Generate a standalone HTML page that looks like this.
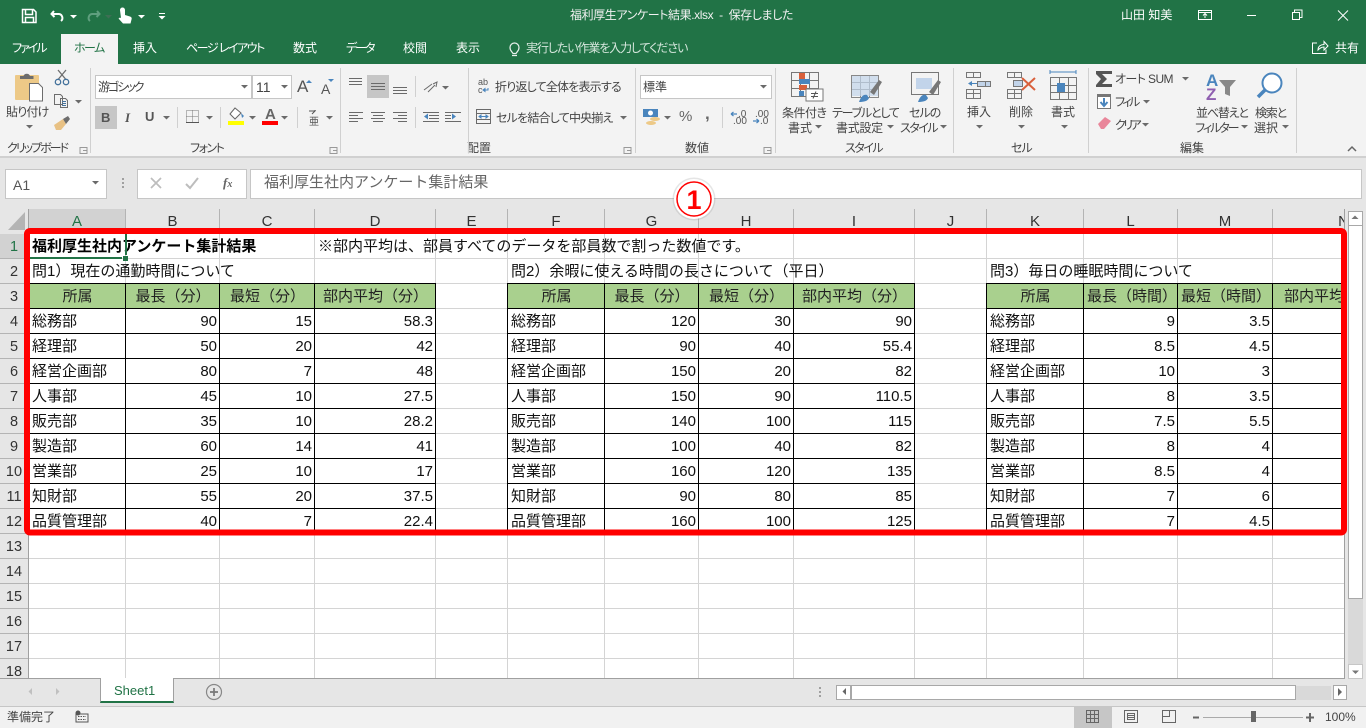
<!DOCTYPE html>
<html lang="ja"><head><meta charset="utf-8"><title>福利厚生アンケート結果.xlsx - Excel</title>
<style>
html,body{margin:0;padding:0;width:1366px;height:728px;overflow:hidden;background:#e6e6e6}
body{position:relative;font-family:"Liberation Sans","Noto Sans CJK JP",sans-serif}
.a{position:absolute}
.t{position:absolute;white-space:nowrap;font-size:12px;line-height:16px;color:#444;font-feature-settings:"palt"}
.w{color:#fff}
.c{text-align:center}
#hdr{position:absolute;left:29px;top:209px;height:25px;width:1316px;overflow:hidden;display:flex}
#hdr div{flex:none;height:24px;line-height:25px;text-align:center;font-size:15px;color:#333;border-right:1px solid #b4b4b4;box-sizing:border-box}
#rows{position:absolute;left:0;top:234px;width:28px}
#rows div{height:24px;border-bottom:1px solid #b4b4b4;line-height:26px;text-align:center;font-size:14.5px;color:#333}
#wrap{position:absolute;left:29px;top:234px;width:1315px;height:300px;overflow:hidden}
table{border-collapse:separate;border-spacing:0;table-layout:fixed;width:1386px}
td{height:25px;padding:0 3px;box-sizing:border-box;font-size:15px;line-height:25px;color:#111;white-space:nowrap;overflow:visible}
td:nth-child(n){vertical-align:middle}
.r{text-align:right}
.h td{background:#a9d08e;text-align:center;color:#222}
.h td.n{background:none}
.b{font-weight:bold;color:#000}
</style></head><body>

<div class="a" style="left:0;top:0;width:1366px;height:64px;background:#217346"></div>
<div class="a" style="left:61px;top:34px;width:57px;height:30px;background:#f3f3f3"></div>
<div class="a" style="left:0;top:64px;width:1366px;height:92px;background:#f3f3f3;border-bottom:2px solid #d0d0d0"></div>

<span class="t w" style="left:570px;top:7px;color:#f1f1f1;letter-spacing:-.4px">福利厚生アンケート結果.xlsx&nbsp; -&nbsp; 保存しました</span>
<span class="t w" style="left:1121px;top:7px">山田 知美</span>
<span class="t w" style="left:12px;top:40px;letter-spacing:-2px">ファイル</span>
<span class="t" style="left:74px;top:40px;color:#217346;letter-spacing:-1.5px">ホーム</span>
<span class="t w" style="left:133px;top:40px">挿入</span>
<span class="t w" style="left:186px;top:40px;letter-spacing:-1.500px">ページ レイアウト</span>
<span class="t w" style="left:293px;top:40px">数式</span>
<span class="t w" style="left:346px;top:40px;letter-spacing:-2px">データ</span>
<span class="t w" style="left:403px;top:40px">校閲</span>
<span class="t w" style="left:456px;top:40px">表示</span>
<span class="t" style="left:526px;top:40px;color:#d5e6dc;letter-spacing:-1.1px">実行したい作業を入力してください</span>
<span class="t w" style="left:1335px;top:40px">共有</span>

<div class="a" style="left:95px;top:75px;width:155px;height:22px;background:#fff;border:1px solid #c6c6c6"></div>
<div class="a" style="left:252px;top:75px;width:38px;height:22px;background:#fff;border:1px solid #c6c6c6"></div>
<div class="a" style="left:640px;top:75px;width:130px;height:22px;background:#fff;border:1px solid #c6c6c6"></div>
<div class="a" style="left:95px;top:106px;width:22px;height:23px;background:#c6c6c6"></div>
<div class="a" style="left:367px;top:75px;width:22px;height:23px;background:#c6c6c6"></div>
<span class="t" style="left:98px;top:79px;letter-spacing:-2px">游ゴシック</span>
<span class="t" style="left:256px;top:79px;font-size:14px">11</span>
<span class="t" style="left:643px;top:79px">標準</span>
<span class="t" style="left:6px;top:104px;letter-spacing:-.8px">貼り付け</span>
<span class="t" style="left:495px;top:79px;letter-spacing:-.8px">折り返して全体を表示する</span>
<span class="t" style="left:496px;top:110px;letter-spacing:-.8px">セルを結合して中央揃え</span>
<span class="t" style="left:782px;top:105px;letter-spacing:-.5px">条件付き</span>
<span class="t" style="left:788px;top:120px">書式</span>
<span class="t" style="left:832px;top:105px;letter-spacing:-1.200px">テーブルとして</span>
<span class="t" style="left:836px;top:120px;letter-spacing:-.3px">書式設定</span>
<span class="t" style="left:909px;top:105px;letter-spacing:-1px">セルの</span>
<span class="t" style="left:900px;top:120px;letter-spacing:-1.500px">スタイル</span>
<span class="t" style="left:967px;top:104px">挿入</span>
<span class="t" style="left:1009px;top:104px">削除</span>
<span class="t" style="left:1051px;top:104px">書式</span>
<span class="t" style="left:1115px;top:71px;letter-spacing:-.6px">オート SUM</span>
<span class="t" style="left:1115px;top:94px;letter-spacing:-2.500px">フィル</span>
<span class="t" style="left:1115px;top:117px;letter-spacing:-2.500px">クリア</span>
<span class="t" style="left:1196px;top:105px;letter-spacing:-1.200px">並べ替えと</span>
<span class="t" style="left:1195px;top:120px;letter-spacing:-2px">フィルター</span>
<span class="t" style="left:1255px;top:105px;letter-spacing:-1.200px">検索と</span>
<span class="t" style="left:1254px;top:120px">選択</span>
<span class="t" style="left:7px;top:140px;letter-spacing:-2px">クリップボード</span>
<span class="t" style="left:190px;top:140px;letter-spacing:-1.500px">フォント</span>
<span class="t" style="left:467px;top:140px">配置</span>
<span class="t" style="left:685px;top:140px">数値</span>
<span class="t" style="left:845px;top:140px;letter-spacing:-1.500px">スタイル</span>
<span class="t" style="left:1011px;top:140px;letter-spacing:-1px">セル</span>
<span class="t" style="left:1180px;top:140px">編集</span>
<span class="t" style="left:679px;top:109px;font-size:15px;color:#666">%</span>
<span class="t" style="left:705px;top:106px;font-size:17px;font-weight:bold;color:#666">,</span>
<span class="t" style="left:297px;top:78px;font-size:17px;line-height:18px;color:#555">A</span>
<span class="t" style="left:321px;top:81px;font-size:14px;line-height:16px;color:#555">A</span>
<span class="t" style="left:101px;top:110px;font-size:13px;font-weight:bold;color:#555">B</span>
<span class="t" style="left:125px;top:110px;font-size:13px;font-style:italic;font-family:'Liberation Serif',serif;font-weight:bold;color:#555">I</span>
<span class="t" style="left:145px;top:109px;font-size:13px;font-weight:bold;color:#555">U</span>
<span class="t" style="left:265px;top:107px;font-size:15px;font-weight:bold;color:#666">A</span>
<span class="t" style="left:309px;top:117px;font-size:10px;line-height:11px;color:#555">亜</span>

<!-- formula bar -->
<div class="a" style="left:5px;top:169px;width:100px;height:28px;background:#fff;border:1px solid #c6c6c6"></div>
<div class="a" style="left:137px;top:169px;width:108px;height:28px;background:#fff;border:1px solid #c6c6c6"></div>
<div class="a" style="left:250px;top:169px;width:1110px;height:28px;background:#fff;border:1px solid #c6c6c6"></div>
<span class="t" style="left:13px;top:177px;font-size:14px;color:#555">A1</span>
<span class="t" style="left:223px;top:175px;font-size:13px;font-family:'Liberation Serif',serif;font-style:italic;font-weight:bold;color:#666">f<span style="font-size:10px">x</span></span>
<span class="t" style="left:264px;top:175px;font-size:15px;line-height:16px;color:#666;font-feature-settings:normal">福利厚生社内アンケート集計結果</span>

<!-- sheet -->
<div class="a" style="left:29px;top:234px;width:1315px;height:444px;background:#fff"></div>
<div class="a" style="left:28px;top:209px;width:98px;height:25px;background:#d2d2d2"></div>
<div class="a" style="left:0;top:234px;width:28px;height:24px;background:#d2d2d2"></div>
<div id="hdr">
<div style="width:97px;color:#217346">A</div><div style="width:94px">B</div><div style="width:95px">C</div><div style="width:121px">D</div><div style="width:72px">E</div><div style="width:97px">F</div><div style="width:94px">G</div><div style="width:95px">H</div><div style="width:121px">I</div><div style="width:72px">J</div><div style="width:97px">K</div><div style="width:94px">L</div><div style="width:95px">M</div><div style="width:142px">N</div>
</div>
<div id="rows" style="height:444px;overflow:hidden">
<div style="color:#217346">1</div><div>2</div><div>3</div><div>4</div><div>5</div><div>6</div><div>7</div><div>8</div><div>9</div><div>10</div><div>11</div><div>12</div><div>13</div><div>14</div><div>15</div><div>16</div><div>17</div><div>18</div>
</div>

<svg class="a" style="left:0;top:0" width="1366" height="728" shape-rendering="crispEdges">
<path fill="none" stroke="#d4d4d4" d="M29 258.500H1344M29 283.500H1344M29 308.500H1344M29 333.500H1344M29 358.500H1344M29 383.500H1344M29 408.500H1344M29 433.500H1344M29 458.500H1344M29 483.500H1344M29 508.500H1344M29 533.500H1344M29 558.500H1344M29 583.500H1344M29 608.500H1344M29 633.500H1344M29 658.500H1344"/>
<path fill="none" stroke="#d4d4d4" d="M125.500 234V678M219.500 234V678M314.500 234V678M435.500 234V678M507.500 234V678M604.500 234V678M698.500 234V678M793.500 234V678M914.500 234V678M986.500 234V678M1083.500 234V678M1177.500 234V678M1272.500 234V678"/>
<path fill="none" stroke="#a0a0a0" d="M28.500 209V678M28 233.500H1344M1344.500 209V678M0 678.500H1345"/>
</svg>

<div id="wrap"><table>
<colgroup><col style="width:97px"><col style="width:94px"><col style="width:95px"><col style="width:121px"><col style="width:72px"><col style="width:97px"><col style="width:94px"><col style="width:95px"><col style="width:121px"><col style="width:72px"><col style="width:97px"><col style="width:94px"><col style="width:95px"><col style="width:142px"></colgroup>
<tr><td class="b">福利厚生社内アンケート集計結果</td><td></td><td></td><td>※部内平均は、部員すべてのデータを部員数で割った数値です。</td><td></td><td></td><td></td><td></td><td></td><td></td><td></td><td></td><td></td><td></td></tr>
<tr><td>問1）現在の通勤時間について</td><td></td><td></td><td></td><td></td><td>問2）余暇に使える時間の長さについて（平日）</td><td></td><td></td><td></td><td></td><td>問3）毎日の睡眠時間について</td><td></td><td></td><td></td></tr>
<tr class="h"><td>所属</td><td>最長（分）</td><td>最短（分）</td><td>部内平均（分）</td><td class="n"></td><td>所属</td><td>最長（分）</td><td>最短（分）</td><td>部内平均（分）</td><td class="n"></td><td>所属</td><td>最長（時間）</td><td>最短（時間）</td><td>部内平均（時間）</td></tr>
<tr><td>総務部</td><td class="r">90</td><td class="r">15</td><td class="r">58.3</td><td></td><td>総務部</td><td class="r">120</td><td class="r">30</td><td class="r">90</td><td></td><td>総務部</td><td class="r">9</td><td class="r">3.5</td><td></td></tr>
<tr><td>経理部</td><td class="r">50</td><td class="r">20</td><td class="r">42</td><td></td><td>経理部</td><td class="r">90</td><td class="r">40</td><td class="r">55.4</td><td></td><td>経理部</td><td class="r">8.5</td><td class="r">4.5</td><td></td></tr>
<tr><td>経営企画部</td><td class="r">80</td><td class="r">7</td><td class="r">48</td><td></td><td>経営企画部</td><td class="r">150</td><td class="r">20</td><td class="r">82</td><td></td><td>経営企画部</td><td class="r">10</td><td class="r">3</td><td></td></tr>
<tr><td>人事部</td><td class="r">45</td><td class="r">10</td><td class="r">27.5</td><td></td><td>人事部</td><td class="r">150</td><td class="r">90</td><td class="r">110.5</td><td></td><td>人事部</td><td class="r">8</td><td class="r">3.5</td><td></td></tr>
<tr><td>販売部</td><td class="r">35</td><td class="r">10</td><td class="r">28.2</td><td></td><td>販売部</td><td class="r">140</td><td class="r">100</td><td class="r">115</td><td></td><td>販売部</td><td class="r">7.5</td><td class="r">5.5</td><td></td></tr>
<tr><td>製造部</td><td class="r">60</td><td class="r">14</td><td class="r">41</td><td></td><td>製造部</td><td class="r">100</td><td class="r">40</td><td class="r">82</td><td></td><td>製造部</td><td class="r">8</td><td class="r">4</td><td></td></tr>
<tr><td>営業部</td><td class="r">25</td><td class="r">10</td><td class="r">17</td><td></td><td>営業部</td><td class="r">160</td><td class="r">120</td><td class="r">135</td><td></td><td>営業部</td><td class="r">8.5</td><td class="r">4</td><td></td></tr>
<tr><td>知財部</td><td class="r">55</td><td class="r">20</td><td class="r">37.5</td><td></td><td>知財部</td><td class="r">90</td><td class="r">80</td><td class="r">85</td><td></td><td>知財部</td><td class="r">7</td><td class="r">6</td><td></td></tr>
<tr><td>品質管理部</td><td class="r">40</td><td class="r">7</td><td class="r">22.4</td><td></td><td>品質管理部</td><td class="r">160</td><td class="r">100</td><td class="r">125</td><td></td><td>品質管理部</td><td class="r">7</td><td class="r">4.5</td><td></td></tr>
</table></div>

<!-- scrollbars / tabs / status -->
<div class="a" style="left:1345px;top:209px;width:21px;height:497px;background:#e6e6e6"></div>
<div class="a" style="left:1348px;top:226px;width:15px;height:452px;background:#d9d9d9"></div>
<div class="a" style="left:1348px;top:211px;width:13px;height:14px;background:#fff;border:1px solid #a8a8a8"></div>
<div class="a" style="left:1348px;top:225px;width:13px;height:372px;background:#fff;border:1px solid #a8a8a8"></div>
<div class="a" style="left:1348px;top:664px;width:13px;height:13px;background:#fff;border:1px solid #c6c6c6"></div>
<div class="a" style="left:0;top:679px;width:1345px;height:27px;background:#e6e6e6"></div>
<div class="a" style="left:100px;top:678px;width:72px;height:23px;background:#fff;border-left:1px solid #a0a0a0;border-right:1px solid #a0a0a0;border-bottom:2px solid #217346"></div>
<span class="t" style="left:114px;top:683px;font-size:13px;color:#217346;font-feature-settings:normal">Sheet1</span>
<div class="a" style="left:836px;top:685px;width:13px;height:13px;background:#fff;border:1px solid #a8a8a8"></div>
<div class="a" style="left:851px;top:685px;width:443px;height:13px;background:#fff;border:1px solid #a8a8a8"></div>
<div class="a" style="left:1296px;top:686px;width:35px;height:14px;background:#d9d9d9"></div>
<div class="a" style="left:1333px;top:685px;width:12px;height:13px;background:#fff;border:1px solid #a8a8a8"></div>
<div class="a" style="left:0;top:706px;width:1366px;height:22px;background:#f1f1f1;box-shadow:inset 0 1px 0 #c6c6c6"></div>
<div class="a" style="left:1074px;top:707px;width:38px;height:21px;background:#c6c6c6"></div>
<span class="t" style="left:7px;top:709px;font-feature-settings:normal;color:#444">準備完了</span>
<span class="t" style="left:1325px;top:709px;color:#444;font-feature-settings:normal">100%</span>

<!-- icons and overlays -->
<svg class="a" style="left:0;top:0" width="1366" height="728">
<defs><path id="d" d="M0 0h7l-3.500 3.500z" fill="#6a6a6a"/><path id="dw" d="M0 0h7l-3.500 3.500z" fill="#fff"/></defs>
<g shape-rendering="crispEdges">
<path fill="none" stroke="#000" d="M28 283.500H436M507 283.500H915M986 283.500H1345M28 308.500H436M507 308.500H915M986 308.500H1345M28 333.500H436M507 333.500H915M986 333.500H1345M28 358.500H436M507 358.500H915M986 358.500H1345M28 383.500H436M507 383.500H915M986 383.500H1345M28 408.500H436M507 408.500H915M986 408.500H1345M28 433.500H436M507 433.500H915M986 433.500H1345M28 458.500H436M507 458.500H915M986 458.500H1345M28 483.500H436M507 483.500H915M986 483.500H1345M28 508.500H436M507 508.500H915M986 508.500H1345"/>
<path fill="none" stroke="#000" d="M125.500 283V533M219.500 283V533M314.500 283V533M435.500 283V533M507.500 283V533M604.500 283V533M698.500 283V533M793.500 283V533M914.500 283V533M986.500 283V533M1083.500 283V533M1177.500 283V533M1272.500 283V533"/>
<path fill="#217346" d="M30 257h92v2h-92zM125 234h2v21h-2zM123 256h5v5h-5z"/>
<path fill="none" stroke="#d0d0d0" d="M90.500 68V153M340.500 68V153M468.500 68V153M635.500 68V153M775.500 68V153M953.500 68V153M1088.500 68V153M1296.500 68V153M177.500 107V128M220.500 107V128M297.500 107V128M415.500 76V97M415.500 107V128M722.500 107V128"/>
</g>

<!-- corner triangle -->
<path d="M25 212V230H8z" fill="#b4b4b4"/>

<!-- title bar icons -->
<g fill="none" stroke="#fff" stroke-width="1.500">
<path d="M22.500 9.500h11l2.500 2.500v10.500h-13.500z"/><path d="M25.500 10v4.500h7v-4.500M25.500 22v-4.500h8v4.500" stroke-width="1.500"/>
<path d="M54 11l-2.500 3 3 3M52 14h7a4 4 0 0 1 2 7" stroke-width="2"/>
<path d="M97 11l2.500 3-3 3M99 14h-7a4 4 0 0 0-2 7" stroke="#5f9f7e" stroke-width="2"/>
<path d="M1198.500 10.500h13v9h-13zM1198.500 12.500h13M1205 18v-4M1203 15.500l2-2 2 2" stroke-width="1"/>
<path d="M1247 15.500h9" stroke-width="1"/>
<path d="M1292.500 12.500h7v7h-7zM1294.500 12v-2h7.500v7.500h-2" stroke-width="1"/>
<path d="M1338 10.500l10 10M1348 10.500l-10 10" stroke-width="1"/>
<path d="M513 53.500c-1-2-3-2.500-3-6a4.500 4.500 0 0 1 9 0c0 3.500-2 4-3 6zM512 55.500h5" stroke-width="1.200" stroke="#e8f0ec"/>
<path d="M1317 43h-4.500v10.500h13.500v-4M1318 50c0-4 3-5.500 6-5.500v-3l4 4.500-4 4v-3c-2 0-4 1-6 3z" stroke-width="1"/>
</g>
<path fill="#fff" d="M120 10a2.500 2.500 0 0 1 5 0v5l5 1.500c1.500.5 2 1.500 1.500 3l-1 4h-7.500l-4.500-5 1.500-1 1 .5z"/>
<use href="#dw" x="70" y="15"/><use href="#d" x="105" y="15" opacity=".4"/><use href="#dw" x="138" y="15"/>
<path d="M159 13.500h6" stroke="#fff"/><use href="#dw" x="158.500" y="16"/>

<!-- clipboard group -->
<rect x="15" y="75" width="24" height="25" rx="1" fill="#edc987"/>
<path d="M20 79v-3h3.500a3.500 3.500 0 0 1 6.500 0h3.500v3z" fill="#6d6d6d"/>
<path d="M29.500 83.500h9l4 4v13.500h-13z" fill="#fff" stroke="#6d6d6d"/>
<g fill="none" stroke="#6d6d6d" stroke-width="1.300">
<path d="M58 70l7.500 9M66 70l-7.500 9"/>
<circle cx="58" cy="82" r="2.700" stroke="#44729c"/><circle cx="66" cy="82" r="2.700" stroke="#44729c"/>
<path d="M54.500 94.500h6l2 2v8h-8zM60.500 98.500h5l2 2v7h-7z" stroke-width="1"/>
<path d="M62 101.500h4M62 103.500h4M62 105.500h4" stroke="#44729c" stroke-width="1"/>
</g>
<path d="M54 125l9-6 3 5-5 6h-5z" fill="#e8c184"/><path d="M63 119l5-3 2 3-4 5z" fill="#6d6d6d"/>
<use href="#d" x="26" y="125"/><use href="#d" x="75" y="100"/>

<!-- font group -->
<use href="#d" x="241" y="85"/><use href="#d" x="281" y="85"/>
<path d="M306 83l3-3 3 3z" fill="#4a85bd"/><path d="M328 79l3 3 3-3z" fill="#4a85bd"/>
<use href="#d" x="163" y="116"/><use href="#d" x="206" y="116"/><use href="#d" x="249" y="116"/><use href="#d" x="281" y="116"/><use href="#d" x="326" y="116"/>
<path d="M186.500 110.500h12v12h-12zM192.500 110.500v12M186.500 116.500h12" fill="none" stroke="#777" stroke-dasharray="1 1"/>
<path d="M186 122.500h13" stroke="#555"/>
<path d="M235 108l-5 6 5 5 6-6z" fill="#fff" stroke="#666"/><path d="M241 113l3 3-2 2z" fill="#4a85bd"/>
<rect x="228" y="121" width="16" height="4" fill="#ff0"/>
<rect x="262" y="121" width="16" height="4" fill="#f00"/>
<path d="M309 111h6l-3 3M315 111v-1" fill="none" stroke="#555"/>

<!-- alignment group -->
<g fill="none" stroke="#6a6a6a" stroke-width="1">
<path d="M349 78.500h13M349 81.500h13M349 84.500h13"/>
<path d="M371 83.500h14M371 86.500h14M371 89.500h14"/>
<path d="M393 87.500h14M393 90.500h14M393 93.500h14"/>
<path d="M349 112.500h14M349 115.500h9M349 118.500h14M349 121.500h9"/>
<path d="M371 112.500h14M373 115.500h10M371 118.500h14M373 121.500h10"/>
<path d="M393 112.500h14M398 115.500h9M393 118.500h14M398 121.500h9"/>
<path d="M429 112.500h10M429 115.500h10M429 118.500h10M423 121.500h16M423 112.500h6"/>
<path d="M451 112.500h10M445 115.500h6M445 118.500h6M445 121.500h16M445 112.500h6"/>
<path d="M424 90l8-6M428 92l7-7M433 84l4-2-1 5"/>
<path d="M476.500 109.500h14v14h-14zM476.500 113.500h14M476.500 119.500h14"/>
</g>
<path d="M424 116.500l4-3v6zM456 116.500l-4-3v6z" fill="#4a85bd"/>
<text x="478" y="85" font-size="9" fill="#555" font-family="Liberation Sans">ab</text>
<text x="478" y="93" font-size="9" fill="#555" font-family="Liberation Sans">c</text>
<path d="M483 90h5v-2M483 90l2-1.500v3z" fill="none" stroke="#4a85bd"/>
<path d="M479 116.500h9M479 116.500l2-1.500v3zM488 116.500l-2-1.500v3z" fill="none" stroke="#4a85bd"/>
<use href="#d" x="442" y="86"/><use href="#d" x="620" y="116"/>

<!-- number group -->
<use href="#d" x="760" y="85"/><use href="#d" x="664" y="116"/>
<rect x="643" y="109" width="15" height="8" fill="#4a85bd"/><circle cx="650.500" cy="113" r="2.500" fill="#fff"/>
<ellipse cx="655" cy="119" rx="5" ry="2" fill="#edc987"/><ellipse cx="651" cy="123" rx="5" ry="2" fill="#edc987"/>
<g font-family="Liberation Sans" font-size="10" fill="#555">
<text x="738" y="117">.0</text><text x="733" y="124">.00</text>
<text x="755" y="117">.00</text><text x="760" y="124">.0</text>
</g>
<path d="M731 114h6M731 114l2.500-2M731 114l2.500 2M753 121h6M759 121l-2.500-2M759 121l-2.500 2" fill="none" stroke="#4a85bd" stroke-width="1.200"/>

<!-- styles group -->
<g fill="none" stroke="#777">
<path d="M791.500 72.500h27v24h-27zM800.500 72.500v24M809.500 72.500v24M791.500 80.500h27M791.500 88.500h27"/>
<path d="M851.500 75.500h27v22h-27zM851.500 82.500h27M851.500 89.500h27M860.500 75.500v22M869.500 75.500v22" stroke="#888"/>
<path d="M911.500 72.500h27v22h-27z"/>
</g>
<path d="M799 73h6v6h-6zM799 85h8v5h-8z" fill="#d9603b"/><path d="M799 79h11v5h-11zM799 91h5v5h-5z" fill="#4a85bd"/>
<rect x="806" y="89" width="17" height="12" fill="#fff" stroke="#777"/>
<path d="M811 93.500h7M811 96.500h7M816 91.500l-3 7" stroke="#555" fill="none"/>
<rect x="852" y="76" width="26" height="20" fill="#c2d4ea" opacity=".7"/>
<path d="M859 102c2-6 5-8 8-7l2 3c-1 3-5 4-10 4z" fill="#4a85bd"/><path d="M870 92l9-12 3 2-8 13z" fill="#777"/>
<rect x="916" y="78" width="16" height="11" fill="#c2d4ea"/>
<path d="M918 102c2-6 5-8 8-7l2 3c-1 3-5 4-10 4z" fill="#4a85bd"/><path d="M929 92l9-12 3 2-8 13z" fill="#777"/>
<use href="#d" x="815" y="125"/><use href="#d" x="887" y="125"/><use href="#d" x="940" y="125"/>

<!-- cells group -->
<g fill="none" stroke="#777">
<path d="M966.500 72.500h14v5h-14zM973.500 72.500v5M966.500 89.500h14v9h-14zM973.500 89.500v9M966.500 93.500h14"/>
<path d="M977.500 81.500h13v5h-13zM985.500 81.500v5" fill="#c2d4ea"/>
<path d="M1007.500 72.500h14v5h-14zM1014.500 72.500v5M1007.500 89.500h14v9h-14zM1014.500 89.500v9M1007.500 93.500h14"/>
<path d="M1013.500 80.500h9v6h-9z" fill="#c2d4ea"/>
<path d="M1050.500 77.500h26v22h-26zM1059.500 77.500v22M1068.500 77.500v22M1050.500 85.500h26M1050.500 92.500h26"/>
<path d="M1050 72h26M1050 70v4M1076 70v4" stroke="#4a85bd"/>
</g>
<path d="M972 81v5l-4-2.500z" fill="#4a85bd"/><rect x="972" y="83" width="5" height="1" fill="#4a85bd"/>
<path d="M1022 78l13 12M1035 78l-13 12" stroke="#d9603b" stroke-width="2" fill="none"/>
<rect x="1057" y="83" width="8" height="9" fill="#4a85bd"/>
<use href="#d" x="976" y="125"/><use href="#d" x="1018" y="125"/><use href="#d" x="1061" y="125"/>

<!-- edit group -->
<path d="M1096 71h16v3h-10l5 5-5 5h10v3h-16v-2l5-6-5-5z" fill="#555"/>
<rect x="1097.500" y="94.500" width="13" height="14" fill="#fff" stroke="#777"/><rect x="1097" y="94" width="14" height="3" fill="#777"/>
<path d="M1104 98v7M1100.500 102l3.500 4 3.500-4" fill="none" stroke="#4a85bd" stroke-width="2"/>
<path d="M1098 124l7-7 6 4-7 8h-3z" fill="#e9869a"/>
<use href="#d" x="1182" y="77"/><use href="#d" x="1143" y="100"/><use href="#d" x="1142" y="123"/><use href="#d" x="1241" y="125"/><use href="#d" x="1282" y="125"/>
<text x="1206" y="86" font-size="17" font-weight="bold" fill="#4a85bd" font-family="Liberation Sans">A</text>
<text x="1206" y="100" font-size="17" font-weight="bold" fill="#8f5fb0" font-family="Liberation Sans">Z</text>
<path d="M1219 80h17l-6 7v9l-5-2v-7z" fill="#888"/>
<circle cx="1272" cy="83" r="9.500" fill="#fff" stroke="#4a85bd" stroke-width="2"/>
<path d="M1265 90l-7 7" stroke="#4a85bd" stroke-width="3.500" fill="none"/>
<path d="M1348 151l4-4 4 4" fill="none" stroke="#666" stroke-width="1.500"/>
<path d="M80 147.500h7v6h-7zM83 150.500h4v3" fill="none" stroke="#999"/>
<path d="M330 147.500h7v6h-7zM333 150.500h4v3" fill="none" stroke="#999"/>
<path d="M624 147.500h7v6h-7zM627 150.500h4v3" fill="none" stroke="#999"/>
<path d="M764 147.500h7v6h-7zM767 150.500h4v3" fill="none" stroke="#999"/>

<!-- formula bar icons -->
<use href="#d" x="92" y="181"/>
<path d="M122 178h2v2h-2zM122 182h2v2h-2zM122 186h2v2h-2z" fill="#a0a0a0"/>
<path d="M151 178l10 10M161 178l-10 10" stroke="#bdbdbd" stroke-width="1.700" fill="none"/>
<path d="M186 184l4 4 8-10" stroke="#bdbdbd" stroke-width="2" fill="none"/>

<!-- scroll arrows -->
<path d="M1351.500 219l3.500-3.500 3.500 3.500z" fill="#777"/>
<path d="M1352 670.500h7l-3.500 3.500z" fill="#777"/>
<path d="M846 688v7l-3.500-3.500z" fill="#666"/>
<path d="M1338 688v8l4-4z" fill="#666"/>
<path d="M32 688v7l-3.500-3.500zM56 688v7l3.500-3.500z" fill="#c0c0c0"/>
<path d="M819 687h2v2h-2zM819 691h2v2h-2zM819 695h2v2h-2z" fill="#a0a0a0"/>
<circle cx="214" cy="692" r="7.500" fill="none" stroke="#888" stroke-width="1.200"/>
<path d="M210 692h8M214 688v8" stroke="#777" stroke-width="1.700"/>

<!-- status bar icons -->
<circle cx="78" cy="713" r="2.500" fill="#555"/>
<path d="M76 714h12v8h-12z" fill="none" stroke="#555"/><path d="M78 716.500h8M78 719.500h8" stroke="#555" stroke-dasharray="1.500 1"/>
<g fill="none" stroke="#666" shape-rendering="crispEdges">
<path d="M1086.500 710.500h12v12h-12zM1090.500 710.500v12M1094.500 710.500v12M1086.500 714.500h12M1086.500 718.500h12"/>
<path d="M1124.500 710.500h13v12h-13zM1127.500 713.500h7v6h-7zM1128 715.500h6M1128 717.500h6"/>
<path d="M1162.500 710.500h13v12h-13zM1169.500 710.500v6h-7"/>
<path d="M1203 717.500h100" stroke="#aaa"/>
<path d="M1193 717.500h6M1306 717.500h8M1310 713v9" stroke="#666" stroke-width="2"/>
</g>
<rect x="1251" y="711" width="5" height="11" fill="#666"/>

<!-- red highlight -->
<rect x="27" y="231" width="1317" height="301.500" rx="3" fill="none" stroke="#f00" stroke-width="6"/>

<!-- badge -->
<circle cx="694" cy="199" r="21.500" fill="#999" opacity=".25"/>
<circle cx="694" cy="199" r="20" fill="#fff"/>
<circle cx="694" cy="199" r="17" fill="#fff" stroke="#f00" stroke-width="1.500"/>
<text x="694" y="209" font-size="27" font-weight="bold" fill="#f00" text-anchor="middle" font-family="Liberation Sans">1</text>
</svg>
</body></html>
